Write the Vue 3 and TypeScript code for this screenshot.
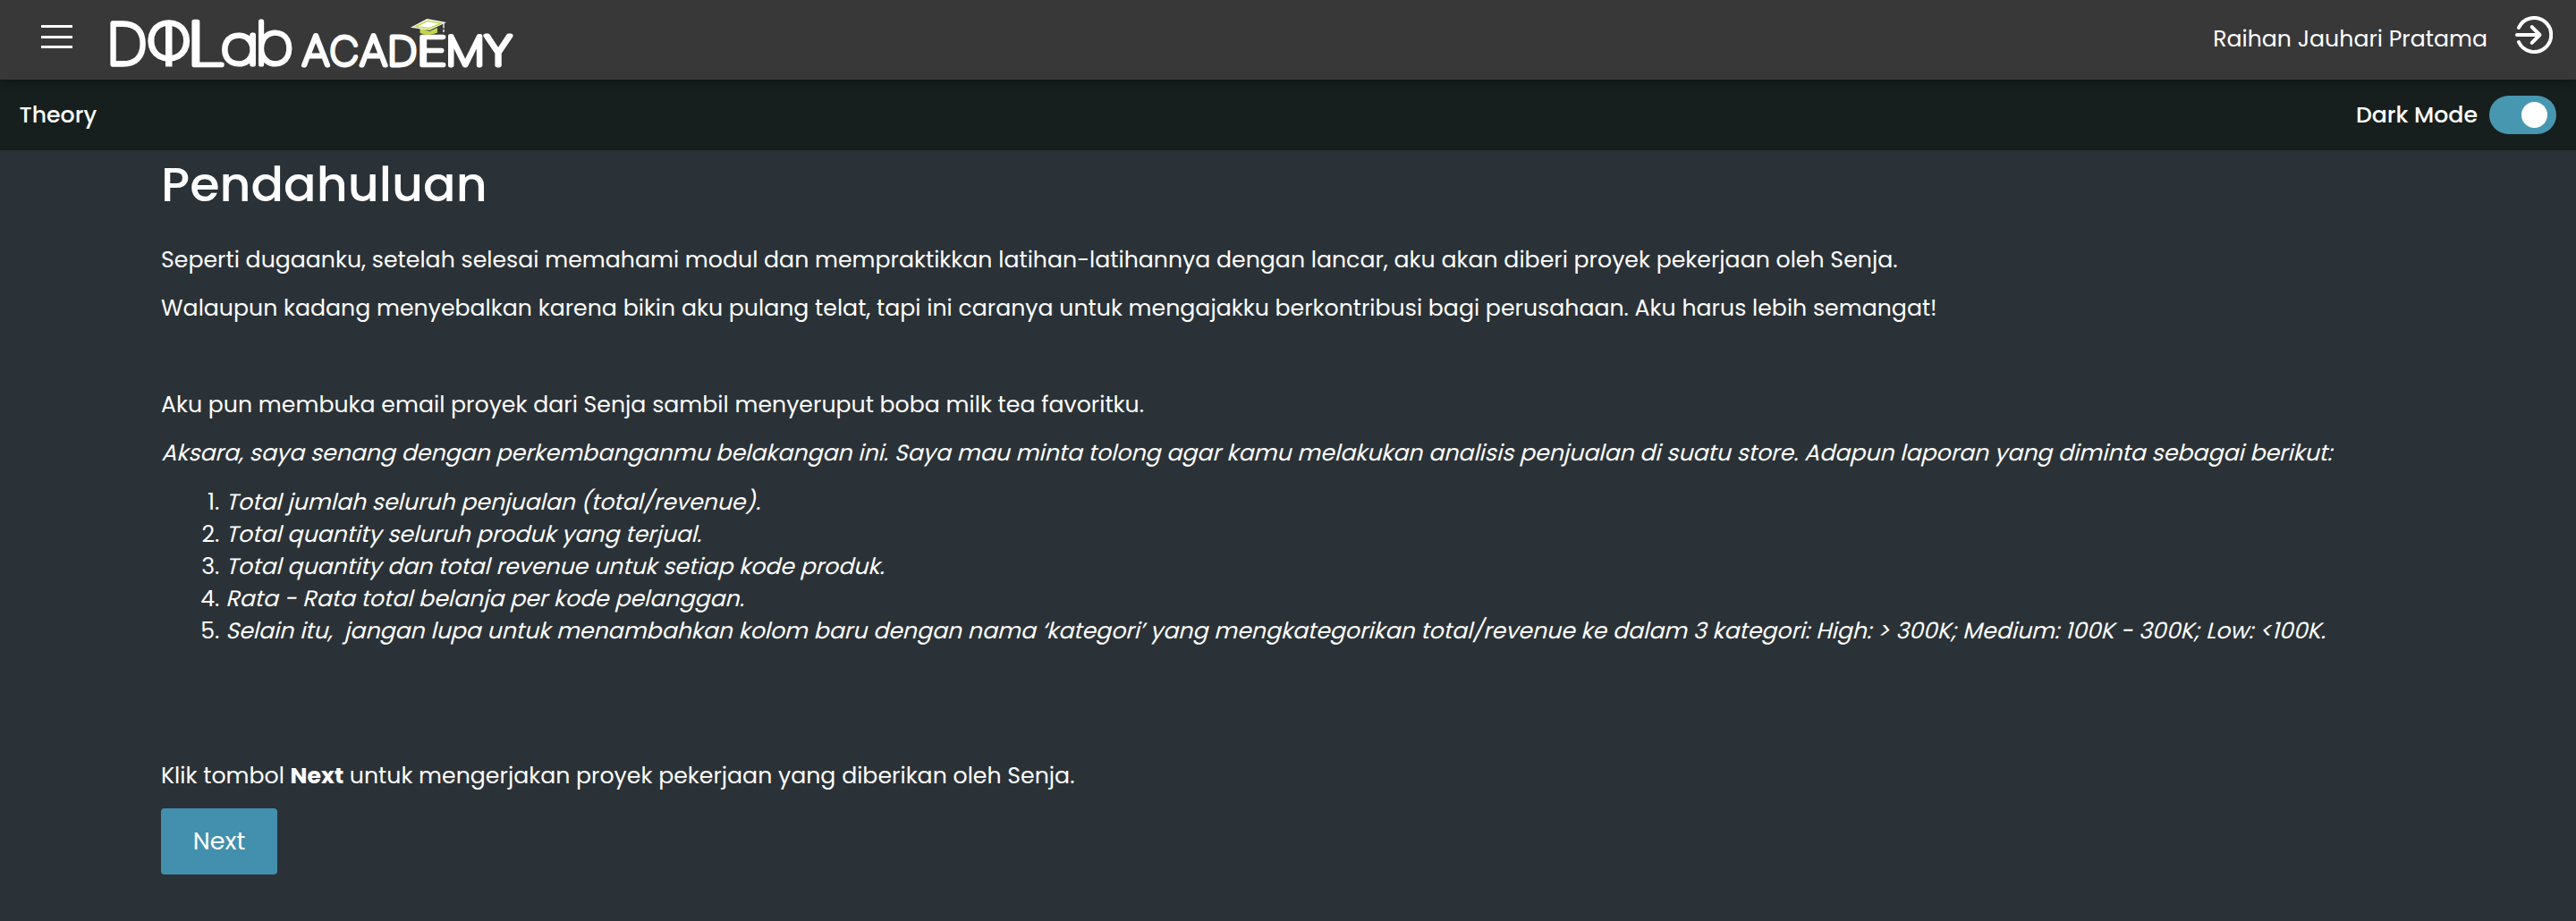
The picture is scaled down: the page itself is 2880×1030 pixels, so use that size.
<script setup lang="ts">
import { ref } from 'vue'

interface Glyph {
  ch: string
  x: number
  y: number
  w: number
  h: number
  stroke: number
}

const darkMode = ref(true)

const wordmark: Glyph[] = [
  { ch: 'D', x: 123, y: 22.5, w: 40.5, h: 52, stroke: 5.4 },
  { ch: 'O', x: 165.5, y: 22, w: 47, h: 47.5, stroke: 5.4 },
  { ch: 'L', x: 215, y: 21.5, w: 35, h: 53.5, stroke: 4.6 },
  { ch: 'a', x: 248, y: 37, w: 38, h: 38.5, stroke: 5.2 },
  { ch: 'b', x: 288.5, y: 21.5, w: 38.5, h: 54, stroke: 5.2 },
  { ch: 'A', x: 337, y: 37, w: 32.5, h: 38.5, stroke: 4.9 },
  { ch: 'C', x: 369, y: 37, w: 31.5, h: 38.5, stroke: 4.9 },
  { ch: 'A', x: 401.5, y: 37, w: 32.5, h: 38.5, stroke: 4.9 },
  { ch: 'D', x: 435.5, y: 37.5, w: 30.5, h: 37.5, stroke: 4.9 },
  { ch: 'E', x: 470, y: 37.5, w: 27.5, h: 37.5, stroke: 4.6 },
  { ch: 'M', x: 501, y: 37.5, w: 38.5, h: 38, stroke: 4.9 },
  { ch: 'Y', x: 541, y: 37, w: 32, h: 38.5, stroke: 4.9 },
]

// Sizes each letter so that its inked area fills the box given in the wordmark.
const BASE = 100
const ctx = document.createElement('canvas').getContext('2d')!
ctx.font = `200 ${BASE}px Poppins`
const placed = wordmark.map(({ ch, x, y, w, h, stroke }) => {
  const m = ctx.measureText(ch)
  const sx = (w - stroke) / (m.actualBoundingBoxRight + m.actualBoundingBoxLeft)
  const sy = (h - stroke) / (m.actualBoundingBoxAscent + m.actualBoundingBoxDescent)
  const tx = x + stroke / 2 + m.actualBoundingBoxLeft * sx
  const ty = y + stroke / 2 + m.actualBoundingBoxAscent * sy
  return { ch, stroke, size: BASE * sy, transform: `translate(${tx} ${ty}) scale(${sx / sy} 1)` }
})

const tasks = [
  'Total jumlah seluruh penjualan (total/revenue).',
  'Total quantity seluruh produk yang terjual.',
  'Total quantity dan total revenue untuk setiap kode produk.',
  'Rata - Rata total belanja per kode pelanggan.',
  'Selain itu,\u00a0 jangan lupa untuk menambahkan kolom baru dengan nama ‘kategori’ yang mengkategorikan total/revenue ke dalam 3 kategori: High: > 300K; Medium: 100K - 300K; Low: <100K.',
]
</script>

<template>
  <div class="page">
    <header class="topbar">
      <button class="menu" aria-label="Menu"><i></i><i></i><i></i></button>
      <svg class="logo" viewBox="110 0 480 89" width="480" height="89" role="img" aria-label="DQLab Academy">
        <text
          v-for="(g, i) in placed"
          :key="i"
          :transform="g.transform"
          :font-size="g.size"
          :stroke-width="g.stroke"
        >{{ g.ch }}</text>
        <rect x="185" y="25" width="7.500" height="49.500" fill="#fff" />
        <path d="M469.500 31v6q10 4 19.500-.5v-5.500l-9 4z" fill="#c3d64b" />
        <path d="M459 30.700 477.500 21 499 24.900l-18.700 8.900z" fill="#fff" />
        <path d="M464.500 29.800 478 23.300 493.500 26l-13.500 5.800z" fill="none" stroke="#c3d64b" stroke-width="1.500" />
        <path d="M496 26v5.500M496 33v3" stroke="#fff" stroke-width="1.300" />
      </svg>
      <span class="user">Raihan Jauhari Pratama</span>
      <svg class="logout" viewBox="0 0 42 42" width="42" height="42" fill="none" stroke="#fff" stroke-width="4" stroke-linecap="round" stroke-linejoin="round">
        <path d="M4 13a19 19 0 1 1 0 16" />
        <path d="M2 21h25M18.700 12.200l8.800 8.800-8.800 8.800" />
      </svg>
    </header>

    <div class="subbar">
      <span>Theory</span>
      <label class="mode">
        <span>Dark Mode</span>
        <span class="switch" :class="{ on: darkMode }" @click="darkMode = !darkMode"><i></i></span>
      </label>
    </div>

    <main>
      <h1>Pendahuluan</h1>
      <p>Seperti dugaanku, setelah selesai memahami modul dan mempraktikkan latihan-latihannya dengan lancar, aku akan diberi proyek pekerjaan oleh Senja.</p>
      <p>Walaupun kadang menyebalkan karena bikin aku pulang telat, tapi ini caranya untuk mengajakku berkontribusi bagi perusahaan. Aku harus lebih semangat!</p>
      <p></p>
      <p>Aku pun membuka email proyek dari Senja sambil menyeruput boba milk tea favoritku.</p>
      <p><em>Aksara, saya senang dengan perkembanganmu belakangan ini. Saya mau minta tolong agar kamu melakukan analisis penjualan di suatu store. Adapun laporan yang diminta sebagai berikut:</em></p>
      <ol>
        <li v-for="t in tasks" :key="t"><em>{{ t }}</em></li>
      </ol>
      <p></p>
      <p></p>
      <p>Klik tombol <b>Next</b> untuk mengerjakan proyek pekerjaan yang diberikan oleh Senja.</p>
      <button class="next">Next</button>
    </main>
  </div>
</template>

<style>
body {
  background: #2a3237;
}
</style>

<style scoped>
.page {
  min-height: 1030px;
  background: #2a3237;
  color: #fff;
  font: 400 25.210px/36px Poppins, sans-serif;
}
button {
  border: 0;
  padding: 0;
  color: inherit;
  font: inherit;
}
/* Slants the upright face about its baseline. */
em {
  display: inline-block;
  font-style: normal;
  transform: skewX(-14deg);
  transform-origin: 0 26.800px;
  vertical-align: top;
}
.topbar {
  position: relative;
  display: flex;
  align-items: flex-start;
  height: 89px;
  padding: 0 26px 0 46px;
  box-sizing: border-box;
  background: #383838;
  box-shadow: 0 3px 10px rgba(0, 0, 0, 0.3);
}
.menu {
  display: flex;
  flex-direction: column;
  gap: 8.500px;
  margin-top: 28px;
  background: none;
}
.menu i {
  width: 35px;
  height: 3px;
  background: #fff;
}
.logo {
  margin-left: 29px;
  overflow: visible;
}
.logo text {
  font-family: Poppins, sans-serif;
  font-weight: 200;
  fill: #fff;
  stroke: #fff;
  stroke-linejoin: round;
}
.user {
  margin: 26px 31px 0 auto;
}
.logout {
  margin-top: 18px;
}
.subbar {
  display: flex;
  align-items: center;
  justify-content: space-between;
  height: 79px;
  padding: 0 22px 0 21.500px;
  box-sizing: border-box;
  background: #161f1d;
  font-weight: 500;
}
.mode {
  display: flex;
  align-items: center;
  gap: 13px;
}
.switch {
  display: flex;
  align-items: center;
  width: 75px;
  height: 43px;
  padding: 0 10px;
  box-sizing: border-box;
  border-radius: 22px;
  background: #777;
}
.switch.on {
  justify-content: flex-end;
  background: #4897b0;
}
.switch i {
  width: 29px;
  height: 29px;
  border-radius: 50%;
  background: #fff;
}
main {
  padding: 4.500px 180px 0;
}
h1 {
  margin: 0 0 33px;
  font-size: 54px;
  line-height: 67px;
  font-weight: 500;
}
p {
  min-height: 36px;
  margin: 0 0 18px;
}
ol {
  margin: 19px 0 18px;
  padding-left: 72px;
}
.next {
  display: block;
  width: 130px;
  height: 74px;
  border-radius: 4px;
  background: #438fae;
  font-size: 27px;
}
</style>
